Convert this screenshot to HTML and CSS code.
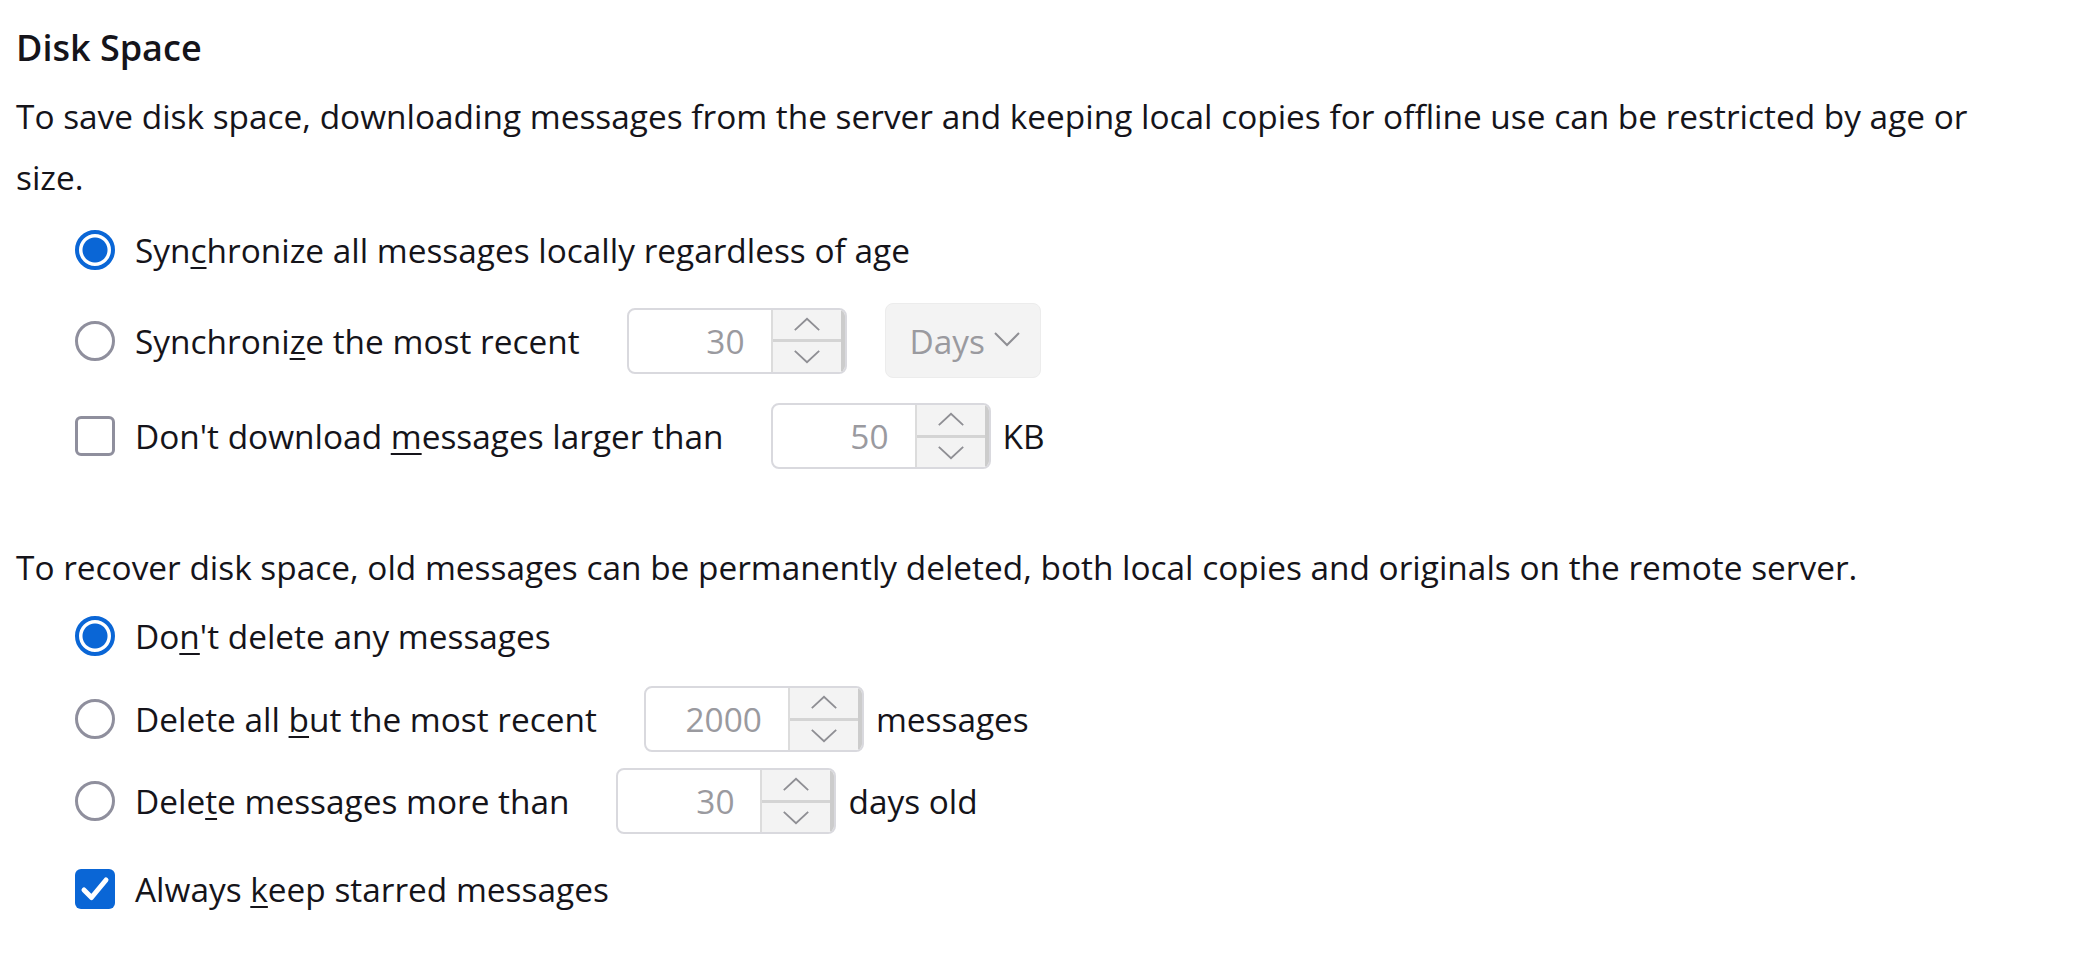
FILE: index.html
```html
<!DOCTYPE html>
<html>
<head>
<meta charset="utf-8">
<link rel="stylesheet" href="styles.css">
</head>
<body>
<div class="page">
  <h1 class="title">Disk Space</h1>
  <p class="desc">To save disk space, downloading messages from the server and keeping local copies for offline use can be restricted by age or size.</p>

  <div class="row r1">
    <span class="radio on"></span>
    <span class="label">Syn<u>c</u>hronize all messages locally regardless of age</span>
  </div>
  <div class="row r2 tall">
    <span class="radio"></span>
    <span class="label">Synchroni<u>z</u>e the most recent</span>
    <div class="spin"><span class="num">30</span><span class="arrows"><span class="up"><svg viewBox="0 0 32 18"><path d="M3 15 L16 3 L29 15"/></svg></span><span class="down"><svg viewBox="0 0 32 18"><path d="M3 3 L16 15 L29 3"/></svg></span></span></div>
    <div class="select">Days<svg viewBox="0 0 28 16"><path d="M2 2 L14 14 L26 2"/></svg></div>
  </div>
  <div class="row r3">
    <span class="check"></span>
    <span class="label">Don't download <u>m</u>essages larger than</span>
    <div class="spin"><span class="num">50</span><span class="arrows"><span class="up"><svg viewBox="0 0 32 18"><path d="M3 15 L16 3 L29 15"/></svg></span><span class="down"><svg viewBox="0 0 32 18"><path d="M3 3 L16 15 L29 3"/></svg></span></span></div>
    <span class="unit">KB</span>
  </div>

  <p class="desc desc2">To recover disk space, old messages can be permanently deleted, both local copies and originals on the remote server.</p>

  <div class="row g1">
    <span class="radio on"></span>
    <span class="label">Do<u>n</u>'t delete any messages</span>
  </div>
  <div class="row g2">
    <span class="radio"></span>
    <span class="label">Delete all <u>b</u>ut the most recent</span>
    <div class="spin"><span class="num">2000</span><span class="arrows"><span class="up"><svg viewBox="0 0 32 18"><path d="M3 15 L16 3 L29 15"/></svg></span><span class="down"><svg viewBox="0 0 32 18"><path d="M3 3 L16 15 L29 3"/></svg></span></span></div>
    <span class="unit">messages</span>
  </div>
  <div class="row g3">
    <span class="radio"></span>
    <span class="label">Dele<u>t</u>e messages more than</span>
    <div class="spin"><span class="num">30</span><span class="arrows"><span class="up"><svg viewBox="0 0 32 18"><path d="M3 15 L16 3 L29 15"/></svg></span><span class="down"><svg viewBox="0 0 32 18"><path d="M3 3 L16 15 L29 3"/></svg></span></span></div>
    <span class="unit">days old</span>
  </div>
  <div class="row g4">
    <span class="check on"><svg viewBox="0 0 40 40"><path d="M9 21 L16.5 28.5 L31 11"/></svg></span>
    <span class="label">Always <u>k</u>eep starred messages</span>
  </div>
</div>
</body>
</html>
```
FILE: styles.css
```css
html, body {
  margin: 0;
  padding: 0;
  background: #ffffff;
}
.page {
  padding: 0 16px;
  font-family: "Open Sans", "Noto Sans", sans-serif;
  font-size: 33.4px;
  color: #15141a;
}
.title {
  margin: 18px 0 0 0;
  font-size: 36px;
  font-weight: 600;
  line-height: 60px;
}
.desc {
  margin: 8px 0 0 0;
  line-height: 61px;
  max-width: 1965px;
}
.desc2 {
  margin-top: 68px;
}
.row {
  display: flex;
  align-items: center;
  height: 66px;
  padding-left: 59px;
}
.row.tall { height: 75px; }
.r1 { margin-top: 9px; }
.r2 { margin-top: 20px; }
.r3 { margin-top: 25px; }
.g1 { margin-top: 5px; }
.g2 { margin-top: 17px; }
.g3 { margin-top: 16px; }
.g4 { margin-top: 22px; }
.label { margin-left: 20px; white-space: nowrap; }
.label u { text-decoration-thickness: 2px; text-underline-offset: 4px; }
.radio {
  width: 40px;
  height: 40px;
  box-sizing: border-box;
  border-radius: 50%;
  border: 3px solid #8f8f9d;
  flex: none;
}
.radio.on {
  border: 4px solid #0a66d6;
  background: radial-gradient(circle, #0a66d6 0 12px, #ffffff 13px);
}
.check {
  width: 40px;
  height: 40px;
  box-sizing: border-box;
  border-radius: 6px;
  border: 3px solid #8f8f9d;
  flex: none;
  display: flex;
  align-items: center;
  justify-content: center;
}
.check.on {
  border: none;
  background: #0a66d6;
}
.check svg { width: 40px; height: 40px; }
.check svg path { fill: none; stroke: #ffffff; stroke-width: 5; stroke-linecap: round; stroke-linejoin: round; }
.spin {
  margin-left: 47px;
  width: 220px;
  height: 66px;
  box-sizing: border-box;
  border: 2px solid #d9d9de;
  border-radius: 8px;
  display: flex;
  overflow: hidden;
  flex: none;
}
.num {
  flex: 1;
  text-align: right;
  padding-right: 26px;
  color: #9a9a9f;
  line-height: 62px;
}
.arrows {
  width: 68px;
  display: flex;
  flex-direction: column;
  background: #f3f3f3;
  border-left: 2px solid #dcdcdc;
  border-right: 4px solid #cccccc;
}
.arrows .up, .arrows .down {
  flex: 1;
  display: flex;
  align-items: center;
  justify-content: center;
}
.arrows .up { border-bottom: 3px solid #d4d4d4; }
.arrows svg { width: 30px; height: 17px; }
.arrows svg path, .select svg path { fill: none; stroke: #8f8f94; stroke-width: 2; }
.select {
  margin-left: 38px;
  width: 156px;
  height: 75px;
  box-sizing: border-box;
  background: #f3f3f3;
  border: 1px solid #ececec;
  border-radius: 8px;
  display: flex;
  align-items: center;
  padding-left: 24px;
  color: #9a9a9f;
  flex: none;
}
.select svg { width: 28px; height: 16px; margin-left: 8px; margin-top: -4px; }
.unit { margin-left: 12px; }
```
